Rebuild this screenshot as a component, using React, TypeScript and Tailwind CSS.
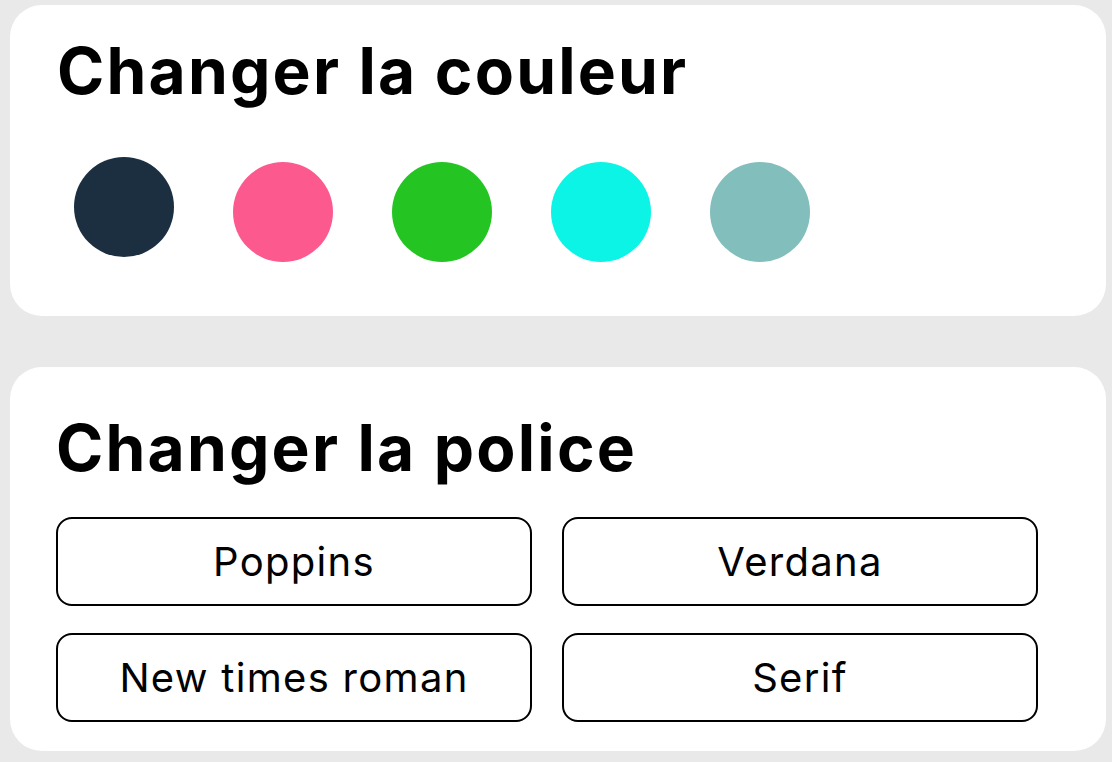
import React, { useState } from 'react';

const colors = [
  { id: 'navy', hex: 'bg-[#1c2f41]' },
  { id: 'pink', hex: 'bg-[#fc5a8f]' },
  { id: 'green', hex: 'bg-[#24c522]' },
  { id: 'cyan', hex: 'bg-[#0cf4e6]' },
  { id: 'teal', hex: 'bg-[#82bebb]' },
];

const fonts = ['Poppins', 'Verdana', 'New times roman', 'Serif'];

export default function App(): JSX.Element {
  const [selectedColor, setSelectedColor] = useState('navy');
  const [selectedFont, setSelectedFont] = useState('Poppins');

  return (
    <div
      className="min-h-screen bg-[#e9e9e9] pt-[5px] pl-[10px] pr-[6px] pb-[10px] text-black"
      style={{ fontFamily: 'Inter, "Noto Sans", sans-serif' }}
    >
      {/* Couleur */}
      <section className="bg-white rounded-[32px] pt-[34px] pb-[54px] px-[47px]">
        <h2 className="text-[64px] leading-[64px] font-bold tracking-[2.2px]">Changer la couleur</h2>
        <div className="flex items-center gap-[59px] pl-[17px] mt-[59px]">
          {colors.map((c) => (
            <button
              key={c.id}
              onClick={() => setSelectedColor(c.id)}
              className={`w-[100px] h-[100px] rounded-full ${c.hex} ${
                selectedColor === c.id ? '-translate-y-[5px]' : ''
              }`}
              aria-label={c.id}
            />
          ))}
        </div>
      </section>

      {/* Police */}
      <section className="bg-white rounded-[32px] mt-[51px] pt-[49px] pb-[29px] px-[46px]">
        <h2 className="text-[64px] leading-[64px] font-bold tracking-[2.2px]">Changer la police</h2>
        <div className="grid grid-cols-[476px_476px] gap-x-[30px] gap-y-[27px] mt-[37px]">
          {fonts.map((f) => (
            <button
              key={f}
              onClick={() => setSelectedFont(f)}
              className={`h-[89px] rounded-2xl border-2 border-black bg-white flex items-center justify-center text-[40px] tracking-[1.3px] ${
                selectedFont === f ? '' : ''
              }`}
            >
              {f}
            </button>
          ))}
        </div>
      </section>
    </div>
  );
}
